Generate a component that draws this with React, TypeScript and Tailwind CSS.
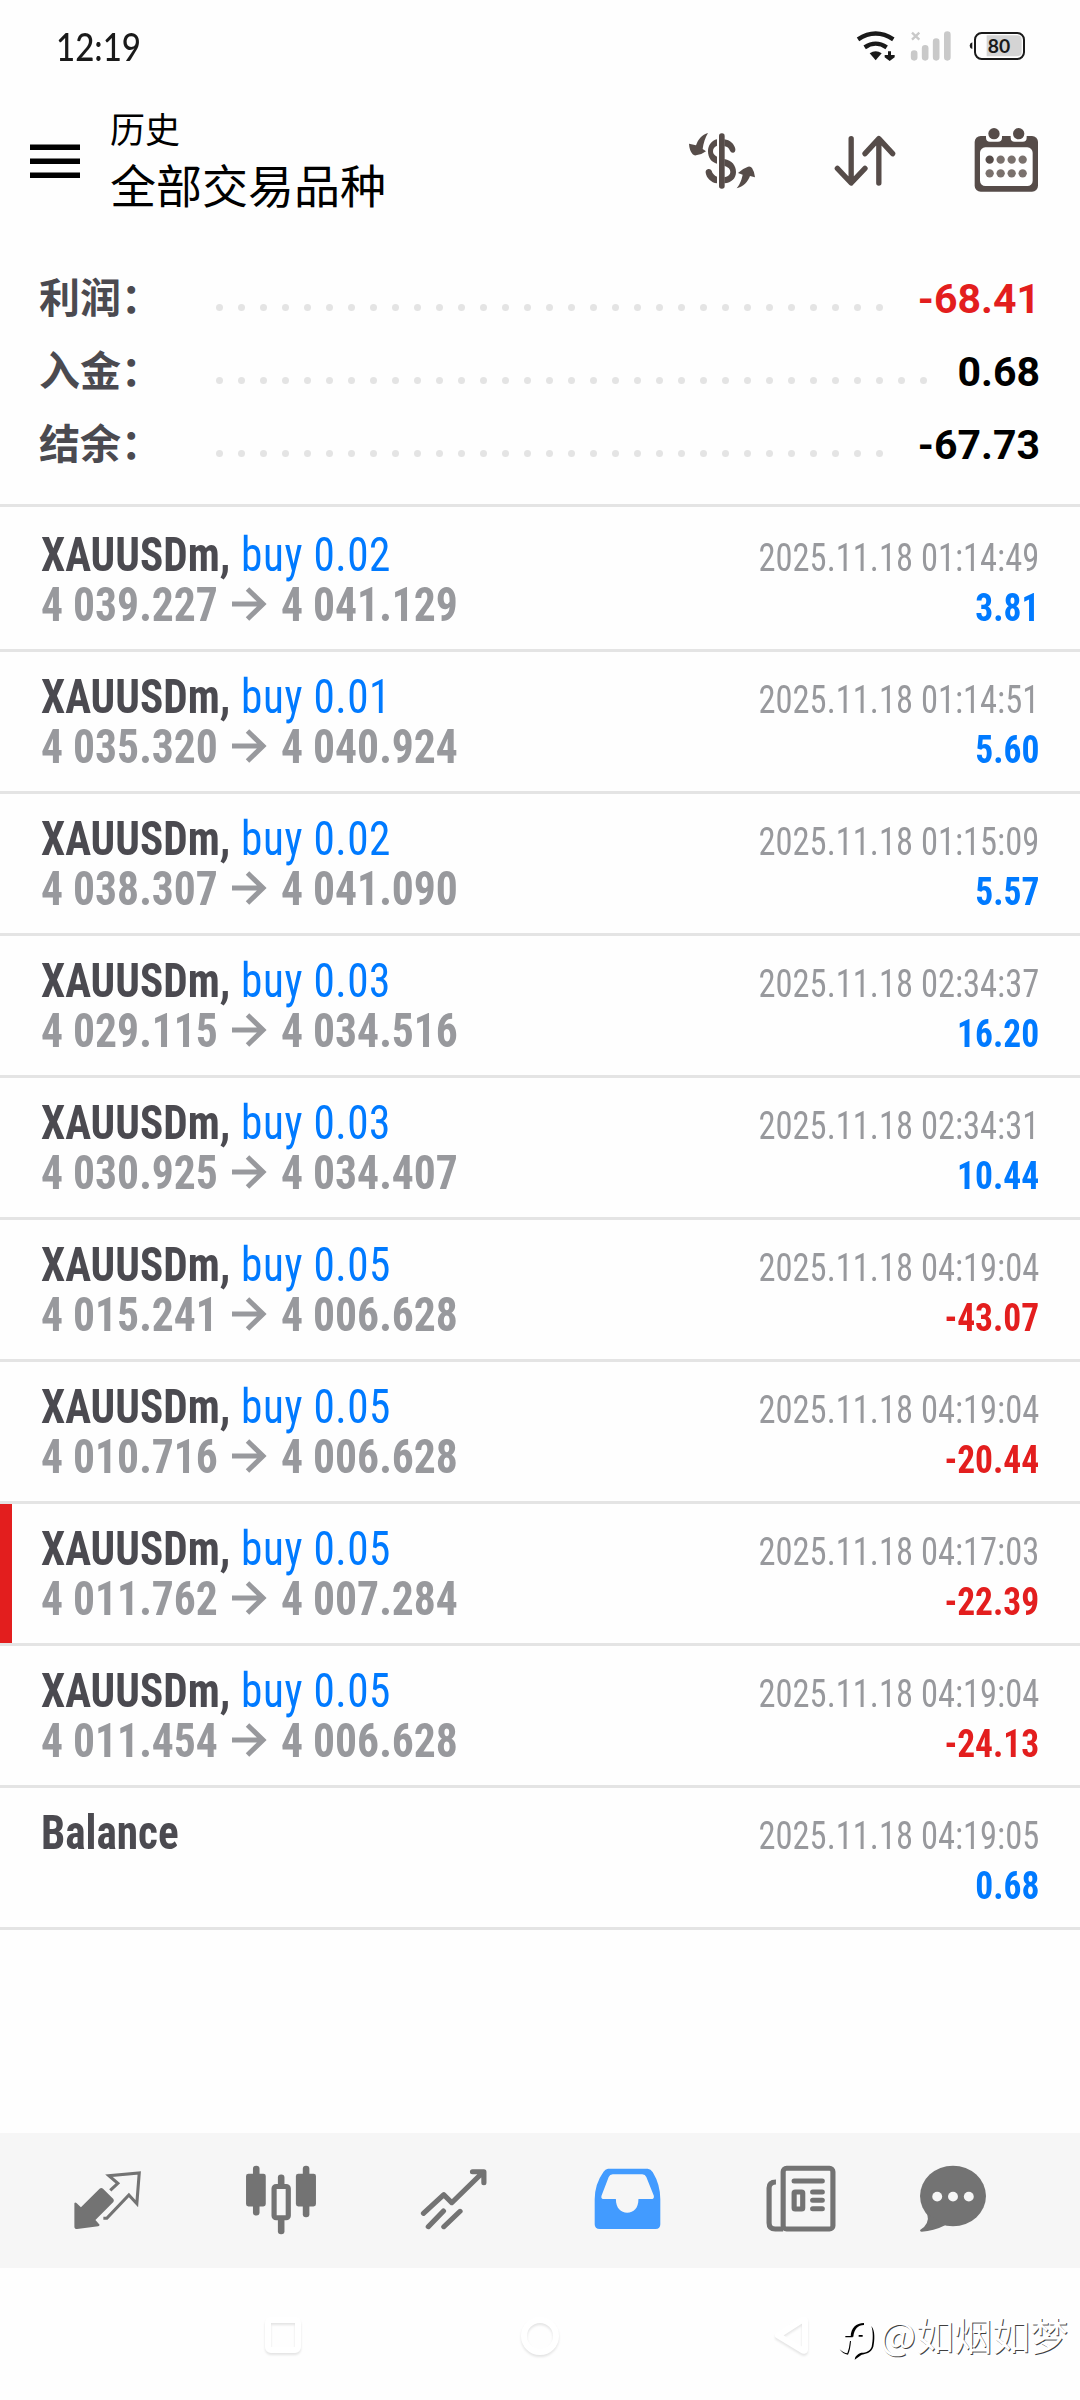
import React from "react";

type Deal = {
  symbol: string;
  volume?: string;
  open?: string;
  close?: string;
  time: string;
  profit: string;
  marked?: boolean;
};

const deals: Deal[] = [
  { symbol: "XAUUSDm", volume: "0.02", open: "4 039.227", close: "4 041.129", time: "2025.11.18 01:14:49", profit: "3.81" },
  { symbol: "XAUUSDm", volume: "0.01", open: "4 035.320", close: "4 040.924", time: "2025.11.18 01:14:51", profit: "5.60" },
  { symbol: "XAUUSDm", volume: "0.02", open: "4 038.307", close: "4 041.090", time: "2025.11.18 01:15:09", profit: "5.57" },
  { symbol: "XAUUSDm", volume: "0.03", open: "4 029.115", close: "4 034.516", time: "2025.11.18 02:34:37", profit: "16.20" },
  { symbol: "XAUUSDm", volume: "0.03", open: "4 030.925", close: "4 034.407", time: "2025.11.18 02:34:31", profit: "10.44" },
  { symbol: "XAUUSDm", volume: "0.05", open: "4 015.241", close: "4 006.628", time: "2025.11.18 04:19:04", profit: "-43.07" },
  { symbol: "XAUUSDm", volume: "0.05", open: "4 010.716", close: "4 006.628", time: "2025.11.18 04:19:04", profit: "-20.44" },
  { symbol: "XAUUSDm", volume: "0.05", open: "4 011.762", close: "4 007.284", time: "2025.11.18 04:17:03", profit: "-22.39", marked: true },
  { symbol: "XAUUSDm", volume: "0.05", open: "4 011.454", close: "4 006.628", time: "2025.11.18 04:19:04", profit: "-24.13" },
  { symbol: "Balance", time: "2025.11.18 04:19:05", profit: "0.68" },
];

const summary = [
  { label: "利润：", value: "-68.41", dots: 31, color: "text-[#e31e1e]" },
  { label: "入金：", value: "0.68", dots: 33, color: "text-black" },
  { label: "结余：", value: "-67.73", dots: 31, color: "text-black" },
];

function StatusBar() {
  return (
    <div className="flex h-[96px] items-start justify-between pl-[56px] pr-[55px] pt-[23px]">
      <span className="origin-left scale-x-[0.87] font-[Lato] text-[38px] font-medium leading-[46px] text-[#1a1a1a]">12:19</span>
      <div className="flex pt-[6px]">
        <svg width="42" height="34" viewBox="585 86 126 102" fill="#1a1a1a">
          <path d="M594 117Q647 82 700 117M614 141Q647 119 680 141" fill="none" stroke="#1a1a1a" strokeWidth="13" />
          <path d="M629 159Q647 147 665 159L647 180Z" />
          <path d="M684 153H693V164H704V171L689 182L674 171V164H684Z" />
        </svg>
        <svg className="ml-[13px]" width="42" height="34" viewBox="751 86 126 102" fill="none" stroke="#c9c9c9" strokeLinecap="round">
          <path d="M757 97L779 118M779 97L757 118" strokeWidth="7" strokeLinecap="butt" />
          <path d="M763.500 160V171M796.500 144V171M829.500 124V171M863 103V171" strokeWidth="20" />
        </svg>
        <svg className="ml-[17px]" width="56" height="34" viewBox="928 86 168 102">
          <path d="M938 126V146Q930 144 930 136Q930 128 938 126Z" fill="#1a1a1a" />
          <path d="M981 105H1072Q1086 105 1086 118V155Q1086 168 1072 168H981Z" fill="#d4d4d4" />
          <rect x="946" y="98" width="147" height="78" rx="20" fill="none" stroke="#1a1a1a" strokeWidth="6" />
          <text x="1018" y="157" textAnchor="middle" className="fill-[#1a1a1a] font-[Lato] text-[58px] font-bold">80</text>
        </svg>
      </div>
    </div>
  );
}

function Header() {
  return (
    <header className="flex h-[146px] pl-[30px] pr-[41px]">
      <svg className="mt-[48px] shrink-0" width="50" height="40" viewBox="0 0 50 40" fill="#000">
        <rect y="0.500" width="50" height="5.500" />
        <rect y="14.500" width="50" height="5.500" />
        <rect y="28.500" width="50" height="5.500" />
      </svg>
      <div className="ml-[30px] mt-[6px] flex-1 font-['Noto_Sans_CJK_SC'] text-black">
        <div className="text-[35px] leading-[52px]">历史</div>
        <div className="-mt-px text-[46px] leading-[60px]">全部交易品种</div>
      </div>
      <div className="flex items-start gap-[77px]">
        <svg className="mt-[36px]" width="68" height="58" viewBox="24 36 204 174" fill="#564c49">
          <rect x="117" y="40" width="17" height="166" rx="8" />
          <path d="M111 58C95 61 84 76 84 94C84 113 95 128 111 131V110C103 106 99 101 99 94C99 86 103 80 111 77Z" />
          <path d="M133 58C150 60 163 72 166 87Q167 96 160 98Q153 99 150 92C147 84 142 80 133 78Z" />
          <path d="M133 117C156 122 168 136 168 156C168 175 155 188 133 190V172C145 169 151 164 151 156C151 147 145 141 133 137Z" />
          <path d="M111 170C103 166 97 160 95 152Q92 146 85 147Q76 149 77 158C80 175 93 187 111 190Z" />
          <path d="M84 39C66 44 54 58 48 76L27 71Q28 91 38 103Q42 107 48 106Q64 105 78 94L68 87C70 70 76 52 84 39Z" />
          <path d="M170 205C182 190 186 174 188 164L174 159Q186 146 204 140Q212 138 216 144Q224 156 225 172L210 168C204 185 190 200 170 205Z" />
        </svg>
        <svg className="mt-[38px]" width="64" height="54" viewBox="519 402 192 162" fill="none" stroke="#564c49" strokeWidth="16" strokeLinecap="round" strokeLinejoin="round">
          <path d="M573.500 416V548M532 505L573.500 549L615 505" />
          <path d="M656.500 549V417M615 461L656.500 416L698 461" />
        </svg>
        <svg className="mt-[31px]" width="65" height="66" viewBox="943 381 195 198" fill="#564c49">
          <rect x="945" y="408" width="190" height="167" rx="18" />
          <path d="M979 400H1027V413Q1027 425 1015 425H991Q979 425 979 413ZM1053 400H1101V413Q1101 425 1089 425H1065Q1053 425 1053 413Z" fill="#fff" />
          <rect x="961" y="442" width="158" height="116" rx="16" fill="#fff" />
          <circle cx="1003" cy="401" r="17" />
          <circle cx="1077" cy="401" r="17" />
          <circle cx="990" cy="479" r="12.500" />
          <g fill="#7a716d">
            <circle cx="1023" cy="479" r="12.500" />
            <circle cx="1056" cy="479" r="12.500" />
            <circle cx="1089" cy="479" r="12.500" />
            <circle cx="990" cy="520" r="12.500" />
            <circle cx="1023" cy="520" r="12.500" />
            <circle cx="1056" cy="520" r="12.500" />
            <circle cx="1089" cy="520" r="12.500" />
          </g>
        </svg>
      </div>
    </header>
  );
}

function Summary() {
  return (
    <section className="h-[265px] border-b-[3px] border-[#e4e4e4] pl-[39px] pr-[40px] pt-[17px]">
      {summary.map((row) => (
        <div key={row.label} className="flex h-[73px] items-center">
          <span className="w-[177px] font-['Noto_Sans_CJK_SC'] text-[41px] font-bold leading-[73px] text-[#4b4a50]">
            {row.label}
          </span>
          <div className="mt-[24px] flex gap-[15px]">
            {Array.from({ length: row.dots }, (_, i) => (
              <span key={i} className="size-[7px] rounded-full bg-[#e4e4e4]" />
            ))}
          </div>
          <span className={`ml-auto pt-[7px] font-[Roboto] text-[41px] font-bold leading-[73px] ${row.color}`}>
            {row.value}
          </span>
        </div>
      ))}
    </section>
  );
}

function DealRow({ deal }: { deal: Deal }) {
  return (
    <li className="relative h-[142px] border-b-[3px] border-[#e4e4e4] pl-[41px] pr-[41px] pt-[20px] font-['Roboto_Condensed'] leading-[50px] first:h-[145px] first:pt-[23px]">
      {deal.marked && <span className="absolute left-0 top-0 h-full w-[12px] bg-[#e31e1e]" />}
      <div className="flex h-[50px] items-baseline justify-between">
        <span className="origin-left scale-x-[0.9] text-[48px] font-bold text-[#4b4a50]">
          {deal.symbol}
          {deal.volume && (
            <>
              , <span className="ml-px font-normal tracking-[0.6px] text-[#007aff]">buy {deal.volume}</span>
            </>
          )}
        </span>
        <span className="origin-right scale-x-[0.885] text-[39px] text-[#98999d]">{deal.time}</span>
      </div>
      {deal.open ? (
        <div className="flex h-[50px] items-baseline justify-between">
          <span className="flex items-baseline text-[48px] font-bold text-[#98999d]">
            <span className="w-[191px] origin-left scale-x-[0.908] whitespace-nowrap">{deal.open}</span>
            <svg className="mr-[14px]" width="35" height="34" viewBox="0 0 35 34" fill="none" stroke="#98999d" strokeWidth="5">
              <path d="M0 17H31M15.500 2L31 17L15.500 32" />
            </svg>
            <span className="origin-left scale-x-[0.908]">{deal.close}</span>
          </span>
          <Profit value={deal.profit} />
        </div>
      ) : (
        <div className="flex h-[50px] items-baseline justify-end pt-[3px]">
          <Profit value={deal.profit} />
        </div>
      )}
    </li>
  );
}

function Profit({ value }: { value: string }) {
  return (
    <span
      className={`origin-right scale-x-[0.91] text-[39px] font-bold ${
        value.startsWith("-") ? "text-[#e31e1e]" : "text-[#007aff]"
      }`}
    >
      {value}
    </span>
  );
}

function TabBar() {
  return (
    <nav className="flex h-[135px] bg-[#f6f6f6] pl-[21px] text-[#737373]">
      <div className="flex w-[173px] justify-center pt-[37px]">
        <svg width="69" height="60" viewBox="215 150 200 180" preserveAspectRatio="none" fill="currentColor">
          <path d="M292 206Q297 202 302 206L332 237Q335 242 332 246L280 300L292 314Q292 318 288 319L227 327Q219 327 219 320V250Q221 245 225 249L238 262Z" />
          <path d="M323 211L345 190L319 167L407 159L400 251L377 225L313 295H303" fill="none" stroke="currentColor" strokeWidth="9" />
        </svg>
      </div>
      <div className="flex w-[173px] justify-center pt-[32px]">
        <svg width="72" height="70" viewBox="712 136 208 208" preserveAspectRatio="none" fill="currentColor">
          <rect x="735" y="138" width="19" height="148" rx="9" />
          <rect x="715" y="162" width="57" height="97" rx="7" />
          <rect x="879" y="138" width="19" height="153" rx="9" />
          <rect x="859" y="162" width="58" height="97" rx="7" />
          <rect x="807" y="164" width="19" height="40" rx="9" />
          <rect x="807" y="290" width="19" height="52" rx="9" />
          <rect x="796" y="200" width="41" height="93" rx="6" fill="none" stroke="currentColor" strokeWidth="15" />
        </svg>
      </div>
      <div className="flex w-[173px] justify-center pt-[35px]">
        <svg width="67" height="62" viewBox="1221 144 194 186" preserveAspectRatio="none" fill="none" stroke="currentColor" strokeWidth="15" strokeLinecap="round" strokeLinejoin="round">
          <path d="M1231 280L1290 224L1313 248L1404 156M1373 155H1406V188" />
          <path d="M1245 320L1289 273M1290 320L1337 274" />
        </svg>
      </div>
      <div className="flex w-[174px] justify-center pt-[35px]">
        <svg width="67" height="62" viewBox="156 144 196 186" preserveAspectRatio="none" fill="#429bff">
          <path
            fillRule="evenodd"
            d="M197 146H313Q322 147 328 157Q350 194 350 238V313Q350 327 336 327H173Q158 327 158 313V238Q158 192 184 155Q189 147 197 146ZM211 163H297Q306 163 309 171L331 227Q333 237 323 237H286C286 265 272 278 253 278C235 278 220 265 220 237H186Q175 237 178 227L199 171Q202 163 211 163Z"
          />
        </svg>
      </div>
      <div className="flex w-[173px] justify-center pt-[32px]">
        <svg width="70" height="68" viewBox="656 136 204 204" preserveAspectRatio="none" fill="none" stroke="currentColor" strokeWidth="15">
          <rect x="706" y="146" width="145" height="182" rx="10" />
          <path d="M685 187Q665 187 665 205V310Q665 328 683 328H706" />
          <path d="M738 184H820M792 217H820M792 242H820M792 267H820" strokeLinecap="round" />
          <rect x="738" y="217" width="25" height="51" rx="3" />
        </svg>
      </div>
      <div className="flex w-[132px] justify-center pt-[32px]">
        <svg width="68" height="68" viewBox="1100 136 198 204" preserveAspectRatio="none" fill="currentColor">
          <ellipse cx="1199" cy="229" rx="96" ry="91" />
          <path d="M1124 282Q1132 312 1104 330Q1101 335 1108 336Q1142 335 1176 317Z" />
          <g fill="#f6f6f6">
            <circle cx="1153" cy="231" r="14.500" />
            <circle cx="1199" cy="231" r="14.500" />
            <circle cx="1245" cy="231" r="14.500" />
          </g>
        </svg>
      </div>
    </nav>
  );
}

function SystemNav() {
  return (
    <div className="flex h-[132px] pt-[48px]">
      <svg className="ml-[259px] drop-shadow-[0_2px_1px_rgba(0,0,0,0.1)]" width="48" height="44" viewBox="0 0 48 44">
        <rect x="9" y="4" width="30" height="30" rx="3" fill="none" stroke="#fff" strokeWidth="6" />
      </svg>
      <svg className="ml-[209px] drop-shadow-[0_2px_1px_rgba(0,0,0,0.1)]" width="48" height="44" viewBox="0 0 48 44">
        <circle cx="24" cy="20" r="16" fill="none" stroke="#fff" strokeWidth="6" />
      </svg>
      <svg className="ml-[204px] drop-shadow-[0_2px_1px_rgba(0,0,0,0.1)]" width="48" height="44" viewBox="0 0 48 44">
        <path d="M37 5V33Q37 36 34 34L10 19.500L34 4Q37 3 37 5Z" fill="none" stroke="#fff" strokeWidth="6" strokeLinejoin="round" />
      </svg>
      <svg className="ml-[22px] mt-[5px] shrink-0" width="40" height="42" viewBox="30 75 120 126" fill="#000">
        <path d="M68 122C69 96 84 81 108 81V87C90 87 78 100 76 122Z" />
        <path d="M130 90C142 103 140 134 136 152C129 172 112 173 101 176L80 191L82 183Q92 171 100 170C116 170 126 164 131 152C135 132 136 108 130 90Z" />
        <path d="M52 120H74V124H52ZM92 117H104V122H92Z" />
        <path d="M66 135H69Q67 162 60 176Q44 174 35 160Q48 172 58 172Q64 156 66 135Z" />
      </svg>
      <span className="-mt-[3px] ml-[2px] whitespace-nowrap font-['Noto_Sans_CJK_SC'] text-[38px] leading-[42px] text-white [text-shadow:1px_1px_0_rgba(0,0,0,0.75)]">
        @如烟如梦
      </span>
    </div>
  );
}

export default function App() {
  return (
    <div className="flex h-[2400px] w-[1080px] flex-col overflow-hidden bg-[#fefefe]">
      <StatusBar />
      <Header />
      <Summary />
      <ul className="flex-1">
        {deals.map((deal, i) => (
          <DealRow key={i} deal={deal} />
        ))}
      </ul>
      <TabBar />
      <SystemNav />
    </div>
  );
}
